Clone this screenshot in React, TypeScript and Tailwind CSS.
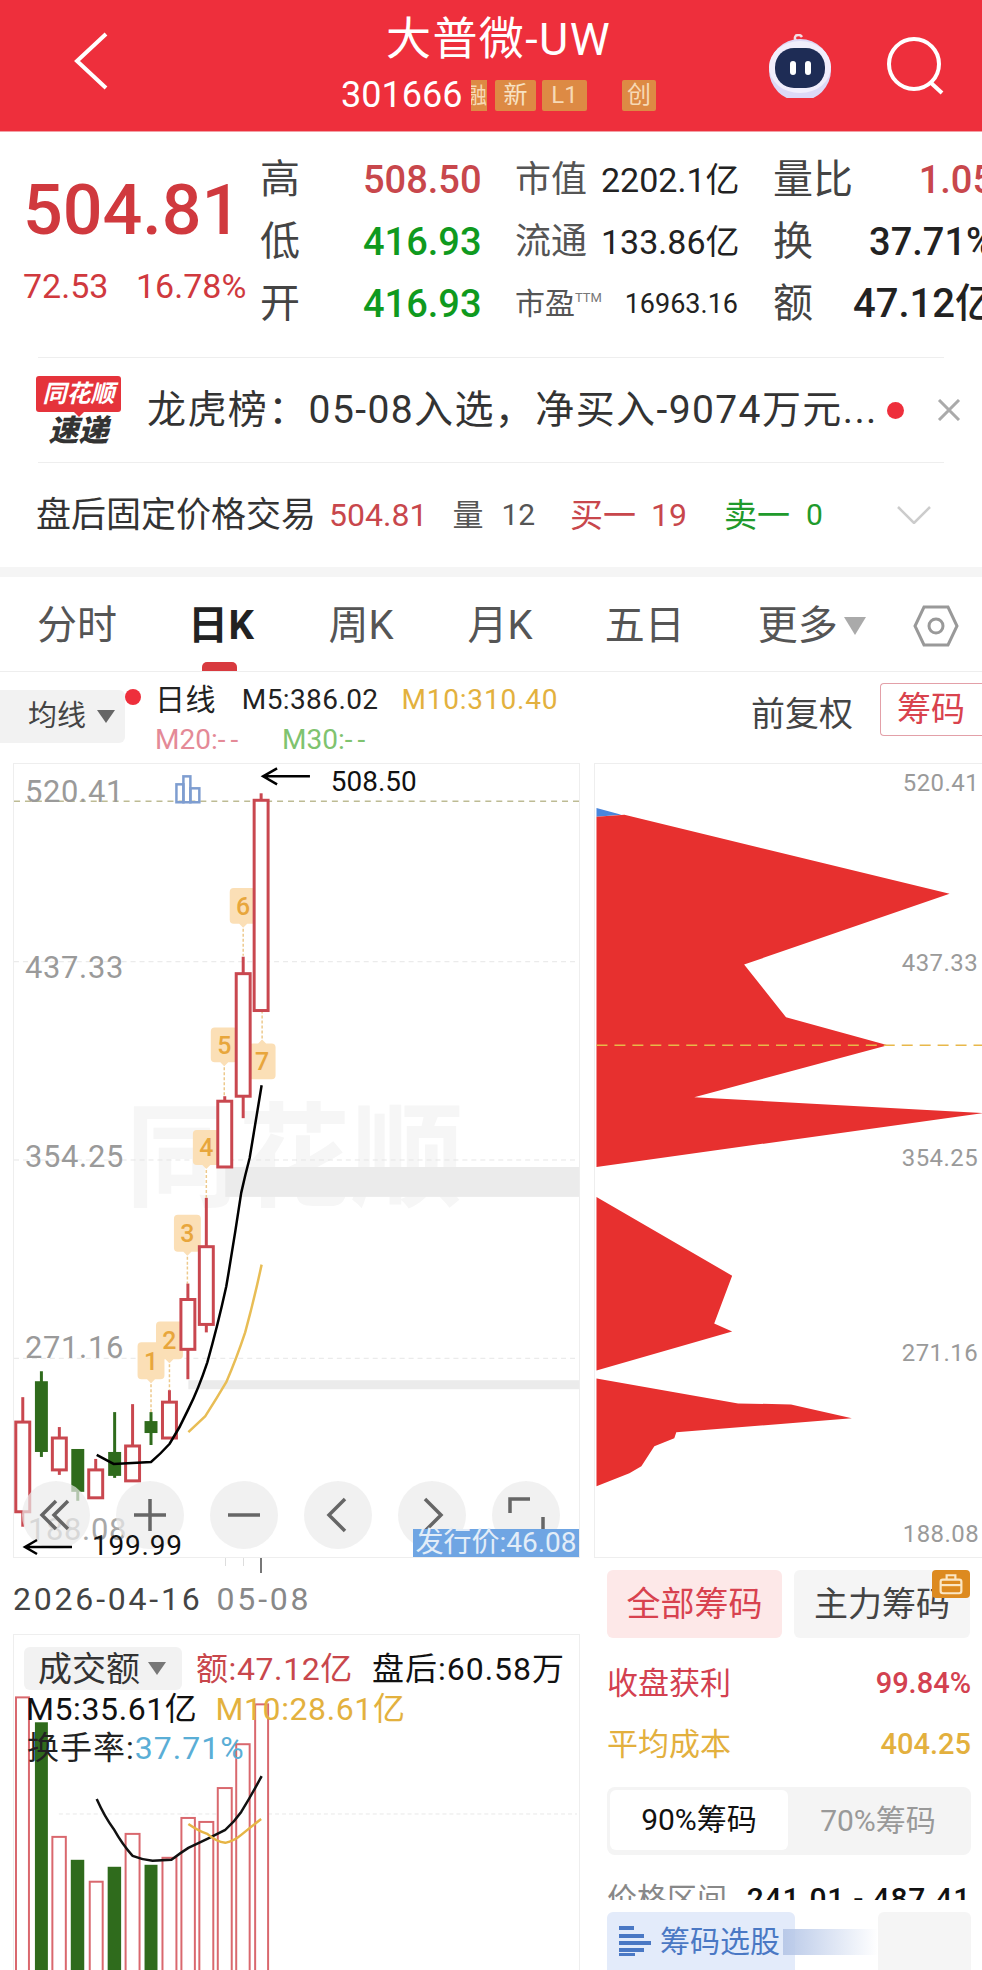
import React from "react";

const RED = "#c9474f";
const GREEN = "#2f6b1c";

const candles: { x: number; w: number; t: number; b: number; hi: number; lo: number; up: boolean }[] = [
  { x: 21.8, w: 14, t: 1423, b: 1513, hi: 1398, lo: 1528, up: true },
  { x: 40.5, w: 13, t: 1382, b: 1453, hi: 1372, lo: 1458, up: false },
  { x: 58.5, w: 14, t: 1439, b: 1471, hi: 1428, lo: 1476, up: true },
  { x: 77, w: 13, t: 1450, b: 1493, hi: 1450, lo: 1502, up: false },
  { x: 95, w: 14, t: 1471, b: 1499, hi: 1460, lo: 1499, up: true },
  { x: 114, w: 13, t: 1453, b: 1477, hi: 1413, lo: 1479, up: false },
  { x: 132, w: 14, t: 1447, b: 1482, hi: 1405, lo: 1482, up: true },
  { x: 150.5, w: 13, t: 1422, b: 1434, hi: 1413, lo: 1446, up: false },
  { x: 169, w: 14, t: 1403, b: 1439, hi: 1391, lo: 1439, up: true },
  { x: 187.5, w: 14, t: 1300, b: 1350, hi: 1284, lo: 1380, up: true },
  { x: 206, w: 14, t: 1247, b: 1325, hi: 1198, lo: 1333, up: true },
  { x: 224.5, w: 14, t: 1101, b: 1167, hi: 1096, lo: 1167, up: true },
  { x: 243, w: 14, t: 973, b: 1096, hi: 956, lo: 1118, up: true },
  { x: 261, w: 14, t: 799, b: 1010, hi: 792, lo: 1010, up: true },
];

const tags: { n: number; cx: number; top: number; bottom: number; lineTo: number; up?: boolean }[] = [
  { n: 1, cx: 150.5, top: 1343, bottom: 1380, lineTo: 1413 },
  { n: 2, cx: 169, top: 1322, bottom: 1360, lineTo: 1391 },
  { n: 3, cx: 187, top: 1215, bottom: 1252, lineTo: 1284 },
  { n: 4, cx: 206, top: 1130, bottom: 1165, lineTo: 1198 },
  { n: 5, cx: 224, top: 1027, bottom: 1062, lineTo: 1096 },
  { n: 6, cx: 243, top: 887, bottom: 923, lineTo: 955 },
  { n: 7, cx: 262, top: 1043, bottom: 1079, lineTo: 1010, up: true },
];

const bars: [number, number, number, boolean][] = [
  [15, 28, 1695, true],
  [34, 47, 1720, false],
  [51.5, 65, 1835, true],
  [70, 83.5, 1858, false],
  [89, 102, 1880, true],
  [107, 120.5, 1865, false],
  [125, 139, 1832, true],
  [144, 157, 1863, false],
  [162, 176, 1856, true],
  [181, 194.5, 1816, true],
  [199, 213, 1820, true],
  [217.5, 231.5, 1786, true],
  [236, 249.5, 1742, true],
  [255, 268, 1702, true],
];

function Tag({ n, cx, top, bottom, lineTo, up }: (typeof tags)[number]) {
  const l = cx - 13.5;
  const r = cx + 13.5;
  const d = up
    ? `M${l + 4} ${top} L${cx - 4} ${top} L${cx} ${top - 4} L${cx + 4} ${top} L${r - 4} ${top} Q${r} ${top} ${r} ${top + 4} L${r} ${bottom - 4} Q${r} ${bottom} ${r - 4} ${bottom} L${l + 4} ${bottom} Q${l} ${bottom} ${l} ${bottom - 4} L${l} ${top + 4} Q${l} ${top} ${l + 4} ${top} Z`
    : `M${l + 4} ${top} L${r - 4} ${top} Q${r} ${top} ${r} ${top + 4} L${r} ${bottom - 4} Q${r} ${bottom} ${r - 4} ${bottom} L${cx + 4} ${bottom} L${cx} ${bottom + 4} L${cx - 4} ${bottom} L${l + 4} ${bottom} Q${l} ${bottom} ${l} ${bottom - 4} L${l} ${top + 4} Q${l} ${top} ${l + 4} ${top} Z`;
  return (
    <g>
      <line x1={cx} x2={cx} y1={up ? top : bottom} y2={lineTo} stroke="#edc98c" strokeWidth="1.5" strokeDasharray="3 2" />
      <path d={d} fill="#fbdfb6" />
      <text x={cx} y={(top + bottom) / 2 + 9} textAnchor="middle" fontSize="25" fontWeight="500" fill="#e8a63c">
        {n}
      </text>
    </g>
  );
}

function KChart() {
  return (
    <svg viewBox="13 763 567 795" className="absolute inset-0 w-full h-full">
      <text x="125" y="1197" fontSize="113" fontWeight="700" fill="#f6f6f6">同花顺</text>
      <rect x="225" y="1167" width="355" height="30" fill="#ebebeb" />
      <rect x="188" y="1381" width="392" height="9" fill="#ebebeb" />
      <line x1="13" x2="580" y1="800" y2="800" stroke="#bdbb94" strokeWidth="1.5" strokeDasharray="6 5" />
      <line x1="13" x2="580" y1="961" y2="961" stroke="#e6e6e6" strokeWidth="1" strokeDasharray="5 4" />
      <line x1="13" x2="580" y1="1160" y2="1160" stroke="#e6e6e6" strokeWidth="1" strokeDasharray="5 4" />
      <line x1="13" x2="580" y1="1359" y2="1359" stroke="#e6e6e6" strokeWidth="1" strokeDasharray="5 4" />
      <g fontSize="31" fill="#9a9a9a" letterSpacing="0.7">
        <text x="24" y="801">520.41</text>
        <text x="24" y="977">437.33</text>
        <text x="24" y="1167">354.25</text>
        <text x="24" y="1359">271.16</text>
        <text x="27" y="1541" fill="#a8a8a8">188.08</text>
      </g>
      <g fill="none" stroke="#7e9dd0" strokeWidth="2.5">
        <rect x="176" y="783" width="7" height="18" />
        <rect x="183" y="775" width="7" height="26" />
        <rect x="190" y="787" width="9" height="14" />
      </g>
      <path d="M310 775 L263 775 M277 767 L263 775 L277 783" fill="none" stroke="#000" strokeWidth="2.5" />
      <text x="331" y="790" fontSize="28" fill="#111">508.50</text>
      {tags.map((t) => (
        <Tag key={t.n} {...t} />
      ))}
      {candles.map((c, i) => {
        const col = c.up ? RED : GREEN;
        return (
          <g key={i}>
            <line x1={c.x} x2={c.x} y1={c.hi} y2={c.lo} stroke={col} strokeWidth="3" />
            {c.up ? (
              <rect x={c.x - c.w / 2} y={c.t} width={c.w} height={c.b - c.t} fill="#fff" stroke={col} strokeWidth="3" />
            ) : (
              <rect x={c.x - c.w / 2} y={c.t} width={c.w} height={c.b - c.t} fill={col} />
            )}
          </g>
        );
      })}
      <path
        d="M96 1456 L113 1465 L150.5 1463 Q160 1455 169 1445 Q180 1428 188 1410 Q198 1390 207 1363 Q217 1328 226 1287 Q234 1240 241 1193 Q245 1175 249.5 1158 L261.5 1085"
        fill="none"
        stroke="#000"
        strokeWidth="2.5"
      />
      <path d="M188 1433 L205 1417 Q216 1400 226 1383 Q236 1360 245 1333 Q254 1300 261.5 1265" fill="none" stroke="#e8bd55" strokeWidth="2.5" />
    </svg>
  );
}

function VolumeChart() {
  return (
    <svg viewBox="13 1634 567 336" className="absolute inset-0 w-full h-full">
      <line x1="58" x2="578" y1="1812" y2="1812" stroke="#e8e8e8" strokeWidth="1" strokeDasharray="4 3" />
      {bars.map(([l, r, t, up], i) =>
        up ? (
          <rect key={i} x={l} y={t} width={r - l} height={1975 - t} fill="#fff" stroke="#d9686e" strokeWidth="2" />
        ) : (
          <rect key={i} x={l} y={t} width={r - l} height={1975 - t} fill={GREEN} />
        ),
      )}
      <path
        d="M96 1797 Q104 1815 113 1827 Q122 1843 132 1854 Q142 1858 152 1859 L171 1858 Q180 1851 188 1846 L207 1837 L225 1828 Q234 1820 241 1810 Q252 1792 261.5 1774"
        fill="none"
        stroke="#111"
        strokeWidth="2.5"
      />
      <path d="M188 1822 Q198 1829 207 1832 Q216 1840 225 1841 Q234 1839 241 1833 Q252 1824 261 1817" fill="none" stroke="#e6b445" strokeWidth="2.5" />
    </svg>
  );
}

function ChipChart() {
  return (
    <svg viewBox="594 763 388 795" className="absolute inset-0 w-full h-full">
      <polygon points="595,807 620,814 595,816" fill="#4a86dc" />
      <polygon points="595,816 623,814 949,893 743,964 785,1017 887,1045 693,1097 982,1113 595,1167" fill="#e7302f" />
      <polygon points="595,1197 731,1276 713,1324 731,1332 595,1371" fill="#e7302f" />
      <polygon points="595,1379 737,1404 790,1405 851,1419 675,1433 673,1439 653,1447 640,1467 628,1474 595,1487" fill="#e7302f" />
      <line x1="595" x2="982" y1="1045" y2="1045" stroke="#e8b84a" strokeWidth="1.5" strokeDasharray="11 7" />
      <g fontSize="24" fill="#9a9a9a" letterSpacing="0.5">
        <text x="902" y="790">520.41</text>
        <text x="901" y="971">437.33</text>
        <text x="901" y="1166">354.25</text>
        <text x="901" y="1362">271.16</text>
        <text x="902" y="1543">188.08</text>
      </g>
    </svg>
  );
}

const Circle = ({ children }: { children: React.ReactNode }) => (
  <div className="w-[68px] h-[68px] rounded-full bg-[#ebebeb]/70 flex items-center justify-center">
    <svg width="40" height="40" viewBox="0 0 40 40" fill="none" stroke="#666" strokeWidth="3.5">
      {children}
    </svg>
  </div>
);

function Stat({ a, b, bc, c, d, dc, e, f, fc, fs }: { a: string; b: string; bc: string; c: React.ReactNode; d: string; dc: string; e: string; f: string; fc: string; fs: string }) {
  return (
    <div className="flex items-center h-[62px] whitespace-nowrap">
      <span className="w-[103px] text-[40px] leading-none text-[#444]">{a}</span>
      <span className="w-[116px] text-right text-[38px] leading-none font-medium" style={{ color: bc }}>
        {b}
      </span>
      <span className="ml-[36px] w-[86px] text-[36px] leading-none text-[#555]">{c}</span>
      <span className={`w-[133px] text-right leading-none text-[#222] ${dc}`}>{d}</span>
      <span className="ml-[39px] w-[80px] text-[40px] leading-none text-[#444]">{e}</span>
      <span className={`w-[141px] text-right leading-none font-medium shrink-0 ${fs}`} style={{ color: fc }}>
        {f}
      </span>
    </div>
  );
}

export default function App() {
  return (
    <div className="w-[982px] h-[1970px] overflow-hidden bg-white font-['Roboto','Noto_Sans_CJK_SC',sans-serif]">
      {/* header */}
      <div className="h-[132px] bg-[#ee2f3c] flex items-center border-b border-[#f2a0a6]">
        <svg width="34" height="58" viewBox="0 0 34 58" className="ml-[74px] -mt-[10px]" fill="none" stroke="#fff" strokeWidth="4">
          <path d="M32 2 L3 29 L32 56" />
        </svg>
        <div className="ml-[233px] w-[315px] flex flex-col items-center text-white">
          <div className="text-[45px] leading-[44px] tracking-[1.4px] -mt-[9px] h-[56px] flex items-center whitespace-nowrap">大普微-UW</div>
          <div className="flex items-center w-full mt-[12px] h-[31px]">
            <span className="text-[36px] leading-none w-[130px]">301666</span>
            <span className="w-[16px] h-[31px] overflow-hidden bg-[#dd8a44] flex justify-end items-center text-[22px] text-[#f7d9b5]">融</span>
            <span className="ml-[8px] w-[41px] h-[31px] bg-[#dd8a44] rounded-[2px] flex items-center justify-center text-[24px] text-[#f7e2c4]">新</span>
            <span className="ml-[6px] w-[45px] h-[31px] bg-[#dd8a44] rounded-[2px] flex items-center justify-center text-[24px] text-[#f7d9b5]">L1</span>
            <span className="ml-[35px] w-[34px] h-[31px] bg-[#dd8a44] rounded-[2px] flex items-center justify-center text-[24px] text-[#f7d9b5]">创</span>
          </div>
        </div>
        <svg width="70" height="64" viewBox="0 0 70 64" className="ml-[109px]" fill="none">
          <path d="M33 8 Q28 5 31 1.5 Q35 0 37 3" stroke="#f3dfe6" strokeWidth="2.5" />
          <circle cx="35" cy="36" r="31" fill="#dcd9f7" />
          <ellipse cx="35" cy="33" rx="31" ry="26" fill="#f1eefc" />
          <rect x="10" y="14" width="50" height="40" rx="19" fill="#1e2c55" />
          <rect x="25" y="27" width="6" height="14" rx="3" fill="#fff" />
          <rect x="40" y="27" width="6" height="14" rx="3" fill="#fff" />
        </svg>
        <svg width="58" height="58" viewBox="0 0 58 58" className="ml-[52px]" fill="none" stroke="#fff" strokeWidth="4">
          <ellipse cx="27" cy="27" rx="25" ry="25" />
          <path d="M43 45 L55 56" />
        </svg>
      </div>

      {/* quote */}
      <div className="flex pt-[17px] h-[225px] w-[1100px]">
        <div className="ml-[23px] w-[237px] shrink-0">
          <div className="text-[70px] leading-[68px] mt-[27px] font-medium text-[#d0393e]">504.81</div>
          <div className="flex mt-[24px] text-[34px] leading-[36px] text-[#d0393e]">
            <span className="w-[113px]">72.53</span>
            <span>16.78%</span>
          </div>
        </div>
        <div>
          <Stat a="高" b="508.50" bc="#c8474c" c="市值" d="2202.1亿" dc="text-[34px]" e="量比" f="1.05" fc="#c8474c" fs="text-[38px]" />
          <Stat a="低" b="416.93" bc="#0f9a1e" c="流通" d="133.86亿" dc="text-[34px]" e="换" f="37.71%" fc="#222" fs="text-[38px]" />
          <Stat
            a="开"
            b="416.93"
            bc="#0f9a1e"
            c={
              <span className="flex items-start text-[30px]">
                市盈<span className="text-[13px] text-[#777] leading-[18px]">TTM</span>
              </span>
            }
            d="16963.16"
            dc="text-[27px] translate-x-[4px]"
            e="额"
            f="47.12亿"
            fc="#222"
            fs="text-[40px]"
          />
        </div>
      </div>

      {/* news */}
      <div className="mx-[38px] border-t border-b border-[#eeeeee] h-[106px] flex items-center relative">
        <div className="-ml-[2px] w-[85px] flex flex-col items-center shrink-0">
          <div className="w-[85px] h-[36px] bg-[#e5333b] rounded-[3px] text-white text-[24px] leading-[36px] font-bold italic text-center">同花顺</div>
          <div className="w-0 h-0 border-l-[5px] border-r-[5px] border-t-[5px] border-l-transparent border-r-transparent border-t-[#e5333b]" />
          <div className="text-[30px] leading-[28px] font-black italic text-[#333] whitespace-nowrap">速递</div>
        </div>
        <div className="ml-[26px] text-[39px] leading-none text-[#333] w-[735px] shrink-0 whitespace-nowrap tracking-[1.4px]">龙虎榜：05-08入选，净买入-9074万元...</div>
        <div className="ml-[5px] w-[17px] h-[17px] rounded-full bg-[#ee2f3c] shrink-0" />
        <svg width="24" height="22" viewBox="0 0 24 22" className="ml-[33px] shrink-0" fill="none" stroke="#aaa" strokeWidth="3">
          <path d="M2 1 L22 21 M22 1 L2 21" />
        </svg>
      </div>

      {/* fixed price */}
      <div className="h-[104px] flex items-center pl-[36px] whitespace-nowrap text-[#333]">
        <span className="text-[35px] leading-none">盘后固定价格交易</span>
        <span className="ml-[13px] text-[32px] leading-none text-[#c8474c]">504.81</span>
        <span className="ml-[25px] text-[31px] leading-none text-[#555]">量</span>
        <span className="ml-[18px] text-[30px] leading-none text-[#555]">12</span>
        <span className="ml-[35px] text-[33px] leading-none text-[#c8474c]">买一</span>
        <span className="ml-[15px] text-[32px] leading-none text-[#c8474c]">19</span>
        <span className="ml-[37px] text-[33px] leading-none text-[#1f9a2c]">卖一</span>
        <span className="ml-[16px] text-[30px] leading-none text-[#1f9a2c]">0</span>
        <svg width="34" height="18" viewBox="0 0 34 18" className="ml-[74px]" fill="none" stroke="#ccc" strokeWidth="2.5">
          <path d="M1 1 L17 17 L33 1" />
        </svg>
      </div>

      <div className="h-[10px] bg-[#f5f5f5]" />

      {/* tabs */}
      <div className="h-[95px] pt-[3px] border-b border-[#eeeeee] flex items-center text-[#555] text-[40px] leading-none whitespace-nowrap">
        <span className="ml-[37px]">分时</span>
        <span className="ml-[71px] relative font-bold text-[#222] tracking-[0.5px]">
          日K
          <span className="absolute left-[14px] top-[56px] w-[35px] h-[9px] rounded-t-[5px] bg-[#d83a3f]" />
        </span>
        <span className="ml-[74px]">周K</span>
        <span className="ml-[74px]">月K</span>
        <span className="ml-[72px]">五日</span>
        <span className="ml-[73px]">更多</span>
        <span className="ml-[6px] w-0 h-0 border-l-[11px] border-r-[11px] border-t-[18px] border-l-transparent border-r-transparent border-t-[#aaa]" />
        <svg width="46" height="42" viewBox="0 0 46 42" className="ml-[47px]" fill="none" stroke="#999" strokeWidth="3">
          <path d="M11 2 L35 2 L44 21 L35 40 L11 40 L2 21 Z" />
          <circle cx="23" cy="21" r="7" />
        </svg>
      </div>

      {/* chart header */}
      <div className="h-[91px] flex whitespace-nowrap">
        <div className="mt-[18px] w-[125px] h-[53px] bg-[#f2f2f2] rounded-r-[6px] flex items-center pl-[28px] text-[29px] leading-none text-[#444]">
          均线
          <span className="ml-[11px] w-0 h-0 border-l-[9px] border-r-[9px] border-t-[13px] border-l-transparent border-r-transparent border-t-[#666]" />
        </div>
        <div className="mt-[17px] w-[16px] h-[16px] rounded-full bg-[#ee2f3c]" />
        <div className="ml-[14px] mt-[9px] w-[402px] shrink-0">
          <div className="flex items-center h-[38px] text-[28px] leading-none tracking-[0.4px]">
            <span className="text-[30px] text-[#222]">日线</span>
            <span className="ml-[26px] text-[#222]">M5:386.02</span>
            <span className="ml-[23px] text-[#e3b13e] tracking-[0.8px]">M10:310.40</span>
          </div>
          <div className="flex items-center h-[38px] mt-[2px] text-[28px] leading-none">
            <span className="text-[#e48a97] w-[127px]">
              M20:<span className="tracking-[5px]">--</span>
            </span>
            <span className="text-[#7fc36f]">
              M30:<span className="tracking-[5px]">--</span>
            </span>
          </div>
        </div>
        <div className="ml-[194px] mt-[22px] w-[102px] text-[34px] leading-[40px] text-[#444] shrink-0">前复权</div>
        <div className="ml-[27px] mt-[11px] w-[102px] h-[53px] border border-r-0 border-[#e3a0a8] rounded-l-[4px] text-[34px] text-[#d9434e] leading-[50px] pl-[16px] shrink-0">筹码</div>
      </div>

      {/* charts */}
      <div className="flex">
        <div className="w-[594px] pl-[13px] shrink-0">
          <div className="relative w-[567px] h-[795px] border border-[#eeeeee]">
            <KChart />
            <div className="absolute left-[8px] top-[717px] flex gap-[26px]">
              <Circle>
                <path d="M20 6 L6 20 L20 34 M32 6 L18 20 L32 34" />
              </Circle>
              <Circle>
                <path d="M20 4 L20 36 M4 20 L36 20" />
              </Circle>
              <Circle>
                <path d="M4 20 L36 20" />
              </Circle>
              <Circle>
                <path d="M27 4 L11 20 L27 36" />
              </Circle>
              <Circle>
                <path d="M13 4 L29 20 L13 36" />
              </Circle>
              <Circle>
                <path d="M24 4 L4 4 L4 18 M37 22 L37 36 L20 36" />
              </Circle>
            </div>
            <svg width="52" height="18" viewBox="0 0 52 18" className="absolute left-[8px] top-[774px]" fill="none" stroke="#000" strokeWidth="2.5">
              <path d="M50 9 L3 9 M15 2 L3 9 L15 16" />
            </svg>
            <div className="absolute left-[78px] top-[768px] text-[28px] leading-[28px] text-[#111] tracking-[0.8px]">199.99</div>
            <div className="absolute right-0 bottom-0 w-[166px] h-[28px] bg-[#6fa5e3] text-[#e3edf8] text-[28px] leading-[28px] text-center whitespace-nowrap">发行价:46.08</div>
          </div>
          <div className="h-[76px] relative">
            <span className="absolute left-[212px] top-0 w-[1px] h-[8px] bg-[#ddd]" />
            <span className="absolute left-[230px] top-0 w-[1px] h-[8px] bg-[#ddd]" />
            <span className="absolute left-[247px] top-0 w-[2px] h-[15px] bg-[#777]" />
            <div className="flex pt-[26px] text-[32px] leading-[30px] tracking-[2.8px] whitespace-nowrap">
              <span className="text-[#444]">2026-04-16</span>
              <span className="ml-[14px] text-[#888]">05-08</span>
            </div>
          </div>
          <div className="relative w-[567px] h-[340px] border border-[#eeeeee]">
            <VolumeChart />
            <div className="absolute left-[10px] top-[12px] whitespace-nowrap leading-none">
              <div className="flex items-center h-[43px]">
                <div className="w-[158px] h-[43px] bg-[#f2f2f2] rounded-[6px] flex items-center pl-[14px] text-[34px] text-[#333]">
                  成交额
                  <span className="ml-[8px] w-0 h-0 border-l-[9px] border-r-[9px] border-t-[13px] border-l-transparent border-r-transparent border-t-[#777]" />
                </div>
                <span className="ml-[14px] text-[32px] text-[#c8474c] tracking-[0.6px]">额:47.12亿</span>
                <span className="ml-[19px] text-[32px] text-[#111] tracking-[1px]">盘后:60.58万</span>
              </div>
              <div className="flex items-center h-[36px] mt-[1px] ml-[2px] text-[32px] tracking-[0.6px]">
                <span className="text-[#111]">M5:35.61亿</span>
                <span className="ml-[18px] text-[#e3b13e]">M10:28.61亿</span>
              </div>
              <div className="flex items-center h-[36px] mt-[3px] ml-[3px] text-[32px] tracking-[1px]">
                <span className="text-[#222]">换手率:</span>
                <span className="text-[#5aaed6]">37.71%</span>
              </div>
            </div>
          </div>
        </div>

        <div className="flex-1">
          <div className="relative h-[795px] border border-r-0 border-[#eeeeee]">
            <ChipChart />
          </div>
          <div className="pl-[13px] pr-[12px] pt-[12px]">
            <div className="flex gap-[12px] h-[68px]">
              <div className="w-[175px] bg-[#fde8e8] rounded-[6px] text-[#d8424f] text-[34px] flex items-center justify-center">全部筹码</div>
              <div className="relative w-[176px] bg-[#f5f5f5] rounded-[6px] text-[#444] text-[34px] flex items-center justify-center">
                主力筹码
                <div className="absolute right-0 top-0 w-[38px] h-[28px] bg-[#dd8a1f] rounded-[4px] flex items-center justify-center">
                  <svg width="24" height="22" viewBox="0 0 22 20" fill="none" stroke="#fbe6c4" strokeWidth="2">
                    <path d="M7 6 L7 2 L15 2 L15 6" />
                    <rect x="1.5" y="6" width="19" height="12.5" rx="2" />
                    <path d="M1.5 11 L20.5 11" />
                  </svg>
                </div>
              </div>
            </div>
            <div className="flex items-center justify-between h-[60px] mt-[15px] text-[#d34150]">
              <span className="text-[31px] leading-none">收盘获利</span>
              <span className="text-[29px] leading-none font-medium">99.84%</span>
            </div>
            <div className="flex items-center justify-between h-[60px] mt-[1px] text-[#e3b03e]">
              <span className="text-[31px] leading-none">平均成本</span>
              <span className="text-[29px] leading-none font-medium">404.25</span>
            </div>
            <div className="flex h-[68px] mt-[13px] bg-[#f4f4f4] rounded-[8px] p-[3px] text-[30px] leading-none">
              <div className="w-[178px] h-[60px] bg-white rounded-[6px] text-[#111] flex items-center justify-center">90%筹码</div>
              <div className="flex-1 text-[#999] flex items-center justify-center">70%筹码</div>
            </div>
            <div className="h-[45px] overflow-hidden relative">
              <div className="flex justify-between items-center mt-[27px] text-[30px] leading-[34px]">
                <span className="text-[#888]">价格区间</span>
                <span className="text-[#111] font-medium tracking-[0.8px]">241.01 - 487.41</span>
              </div>
            </div>
            <div className="mt-[12px] flex h-[58px] relative">
              <div className="w-[188px] bg-[#e3ebfa] rounded-t-[6px] flex items-start pt-[14px] pl-[12px] text-[#4a78c4] text-[30px] leading-[32px] whitespace-nowrap">
                <svg width="32" height="30" viewBox="0 0 32 30" className="mr-[9px] shrink-0" fill="#4a78c4">
                  <rect x="0" y="0" width="15" height="4" />
                  <rect x="0" y="8" width="25" height="4" />
                  <rect x="0" y="15" width="32" height="4" />
                  <rect x="0" y="22" width="25" height="4" />
                  <rect x="0" y="27" width="16" height="3" />
                </svg>
                筹码选股
              </div>
              <div className="w-[95px] h-[26px] mt-[17px] -ml-[12px] bg-linear-to-r from-[#b9c9e8] to-white/0" />
              <div className="ml-auto w-[93px] bg-[#f5f5f5] rounded-t-[6px]" />
            </div>
          </div>
        </div>
      </div>
    </div>
  );
}
